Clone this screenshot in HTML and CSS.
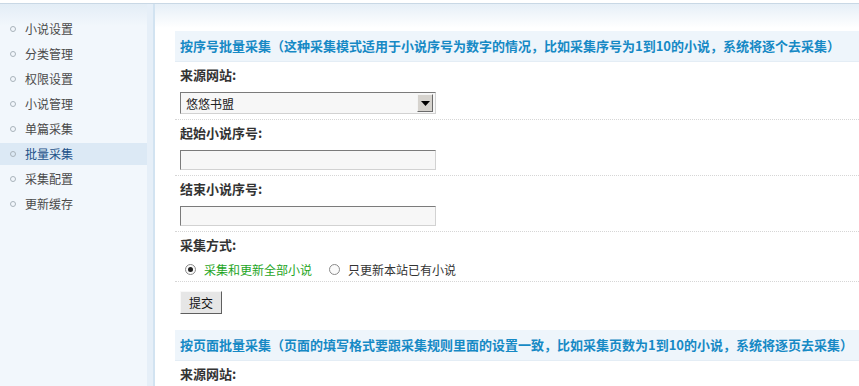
FILE: index.html
```html
<!DOCTYPE html>
<html lang="zh-CN">
<head>
  <meta charset="UTF-8">
  <title>批量采集</title>
  <link rel="stylesheet" href="styles.css">
</head>
<body>
<div class="topline"></div>
<div class="wrap">
  <!-- 左侧菜单 -->
  <div class="sidebar">
    <ul class="menu">
      <li>小说设置</li>
      <li>分类管理</li>
      <li>权限设置</li>
      <li>小说管理</li>
      <li>单篇采集</li>
      <li class="active">批量采集</li>
      <li>采集配置</li>
      <li>更新缓存</li>
    </ul>
  </div>

  <!-- 主体 -->
  <div class="main">
    <form class="block">
      <div class="block-title">按序号批量采集（这种采集模式适用于小说序号为数字的情况，比如采集序号为1到10的小说，系统将逐个去采集）</div>
      <div class="row">
        <div class="label">来源网站:</div>
        <div class="select-wrap">
          <select class="select">
            <option>悠悠书盟</option>
          </select>
          <span class="select-btn">
            <svg width="9" height="5" viewBox="0 0 9 5"><path d="M0 0H9L4.5 5Z" fill="#000"/></svg>
          </span>
        </div>
      </div>
      <div class="row">
        <div class="label">起始小说序号:</div>
        <input class="text" type="text">
      </div>
      <div class="row">
        <div class="label">结束小说序号:</div>
        <input class="text" type="text">
      </div>
      <div class="row">
        <div class="label">采集方式:</div>
        <div class="radios">
          <label class="radio green"><input type="radio" name="mode" checked> 采集和更新全部小说</label>
          <label class="radio"><input type="radio" name="mode"> 只更新本站已有小说</label>
        </div>
      </div>
      <div class="actions">
        <button type="button" class="btn">提交</button>
      </div>
    </form>

    <form class="block">
      <div class="block-title">按页面批量采集（页面的填写格式要跟采集规则里面的设置一致，比如采集页数为1到10的小说，系统将逐页去采集）</div>
      <div class="row">
        <div class="label">来源网站:</div>
      </div>
    </form>
  </div>
</div>
</body>
</html>
```

FILE: styles.css
```css
/* Page */
body {
  margin: 0;
  font-family: "Noto Sans CJK SC", "Liberation Sans", sans-serif;
  font-size: 12px;
  color: #333;
  background: #fff;
  overflow: hidden;
}

.topline {
  height: 3px;
  background: #fff;
  border-bottom: 1px solid #c9d8e5;
}

.wrap {
  display: flex;
  height: 382px;
}

/* Sidebar */
.sidebar {
  width: 147px;
  flex-shrink: 0;
  background: linear-gradient(#e3edf6, #f2f7fc 22px);
  border-right: 6px solid #e6eff8;
}

.menu {
  list-style: none;
  margin: 0;
  padding: 14px 0 0;
}

.menu li {
  height: 22px;
  line-height: 22px;
  margin-bottom: 3px;
  padding-left: 25px;
  color: #4a4a4a;
  position: relative;
}

.menu li::before {
  content: "";
  position: absolute;
  left: 10px;
  top: 8px;
  width: 4px;
  height: 4px;
  border: 1px solid #a9b3bb;
  border-radius: 50%;
}

.menu li.active {
  background: #dce9f5;
  color: #1d5189;
}

/* Main */
.main {
  flex: 1;
  border-left: 2px solid #d2e3f1;
  background: linear-gradient(#e6eff7, #fff 24px);
  padding: 27px 0 0 20px;
}

.block-title {
  height: 30px;
  line-height: 30px;
  padding-left: 5px;
  background: #eef5fb;
  border-bottom: 1px solid #e4edf5;
  color: #1689c5;
  font-size: 13px;
  font-weight: bold;
  white-space: nowrap;
}

.row {
  padding: 1px 5px 5px;
  border-bottom: 1px dotted #d6d6d6;
}

.label {
  height: 24px;
  line-height: 24px;
  font-size: 13px;
  font-weight: bold;
  color: #333;
  margin-bottom: 5px;
}

/* Select */
.select-wrap {
  position: relative;
  width: 256px;
  height: 22px;
  margin-top: 1px;
}

.select {
  appearance: none;
  width: 256px;
  height: 22px;
  margin: 0;
  padding: 0 0 0 5px;
  font-family: inherit;
  font-size: 12px;
  color: #222;
  background: #f7f7f7;
  border: 1px solid;
  border-color: #7b7b7b #d2d2d2 #d2d2d2 #7b7b7b;
  border-radius: 0;
  outline: none;
}

.select-btn {
  position: absolute;
  right: 3px;
  top: 2px;
  width: 16px;
  height: 18px;
  background: #d6d3ce;
  border: 1px solid;
  border-color: #f4f4f4 #6b6b6b #6b6b6b #f4f4f4;
  box-sizing: border-box;
  display: flex;
  align-items: center;
  justify-content: center;
}

/* Text input */
.text {
  display: block;
  width: 256px;
  height: 20px;
  box-sizing: border-box;
  margin: 0;
  padding: 0 4px;
  background: #f7f7f7;
  border: 1px solid;
  border-color: #7b7b7b #d2d2d2 #d2d2d2 #7b7b7b;
  font-family: inherit;
  font-size: 12px;
}

/* Radios */
.radios {
  display: flex;
  height: 22px;
  align-items: center;
  margin: -4px 0 -4px;
}

.radio {
  display: flex;
  align-items: center;
  color: #333;
  margin-right: 12px;
}

.radio.green {
  color: #1ea51e;
}

.radio input {
  appearance: none;
  width: 11px;
  height: 11px;
  margin: 0 8px 0 5px;
  border: 1px solid #8a8a8a;
  border-radius: 50%;
  background: #fafafa;
  position: relative;
}

.radio input:checked::after {
  content: "";
  position: absolute;
  left: 2px;
  top: 2px;
  width: 5px;
  height: 5px;
  border-radius: 50%;
  background: #222;
}

/* Button */
.actions {
  padding: 9px 5px 16px;
}

.btn {
  width: 42px;
  height: 23px;
  padding: 0;
  font-family: inherit;
  font-size: 12px;
  color: #111;
  background: #e6e6e6;
  border: 1px solid;
  border-color: #f8f8f8 #5f5f5f #5f5f5f #f8f8f8;
  border-radius: 0;
}
```
